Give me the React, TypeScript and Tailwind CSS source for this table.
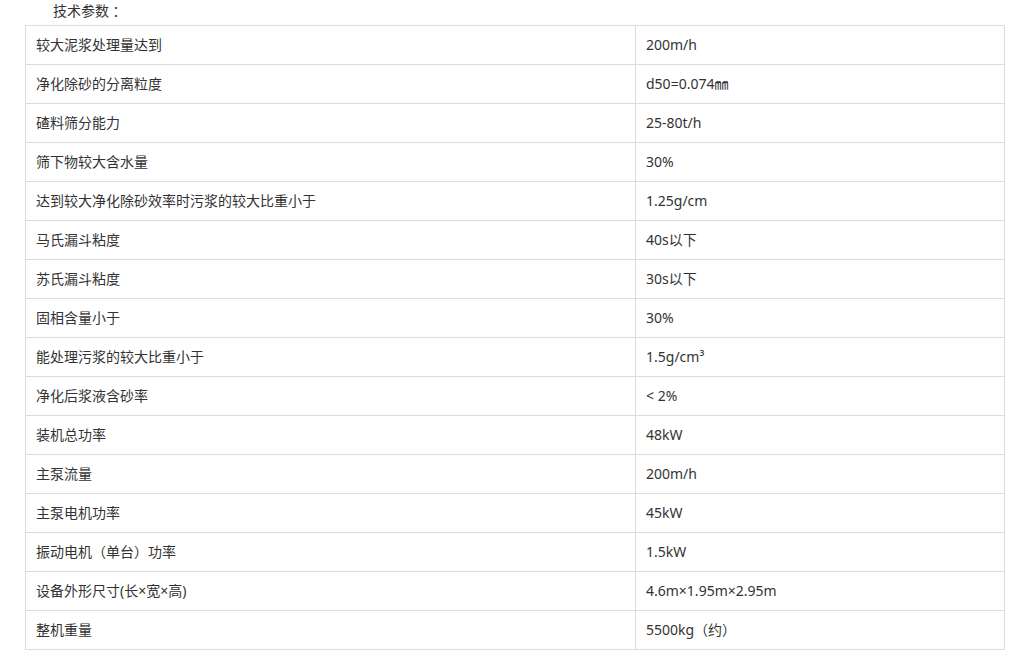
import React from 'react';

const rows: [string, string][] = [
  ['较大泥浆处理量达到', '200m/h'],
  ['净化除砂的分离粒度', 'd50=0.074㎜'],
  ['碴料筛分能力', '25-80t/h'],
  ['筛下物较大含水量', '30%'],
  ['达到较大净化除砂效率时污浆的较大比重小于', '1.25g/cm'],
  ['马氏漏斗粘度', '40s以下'],
  ['苏氏漏斗粘度', '30s以下'],
  ['固相含量小于', '30%'],
  ['能处理污浆的较大比重小于', '1.5g/cm³'],
  ['净化后浆液含砂率', '< 2%'],
  ['装机总功率', '48kW'],
  ['主泵流量', '200m/h'],
  ['主泵电机功率', '45kW'],
  ['振动电机（单台）功率', '1.5kW'],
  ['设备外形尺寸(长×宽×高)', '4.6m×1.95m×2.95m'],
  ['整机重量', '5500kg（约）'],
];

export default function App() {
  return (
    <div
      className="w-[1015px] h-[655px] bg-white text-[14px] text-[#333]"
      style={{ fontFamily: '"Noto Sans", "Noto Sans CJK SC", sans-serif' }}
    >
      <div className="h-[25px] pl-[53px] flex items-center leading-none pb-[4px]">
        技术参数<span className="font-['Noto_Sans_CJK_TC',sans-serif]">：</span>
      </div>
      <div className="ml-[25px] w-[980px] grid grid-cols-[610px_1fr] border-l border-t border-[#dcdcdc]">
        {rows.map(([k, v]) => (
          <React.Fragment key={k}>
            <div className="h-[39px] flex items-center pl-[10px] pb-[2px] border-r border-b border-[#dcdcdc]">{k}</div>
            <div className="h-[39px] flex items-center pl-[10px] pb-[2px] border-r border-b border-[#dcdcdc]">{v}</div>
          </React.Fragment>
        ))}
      </div>
    </div>
  );
}
